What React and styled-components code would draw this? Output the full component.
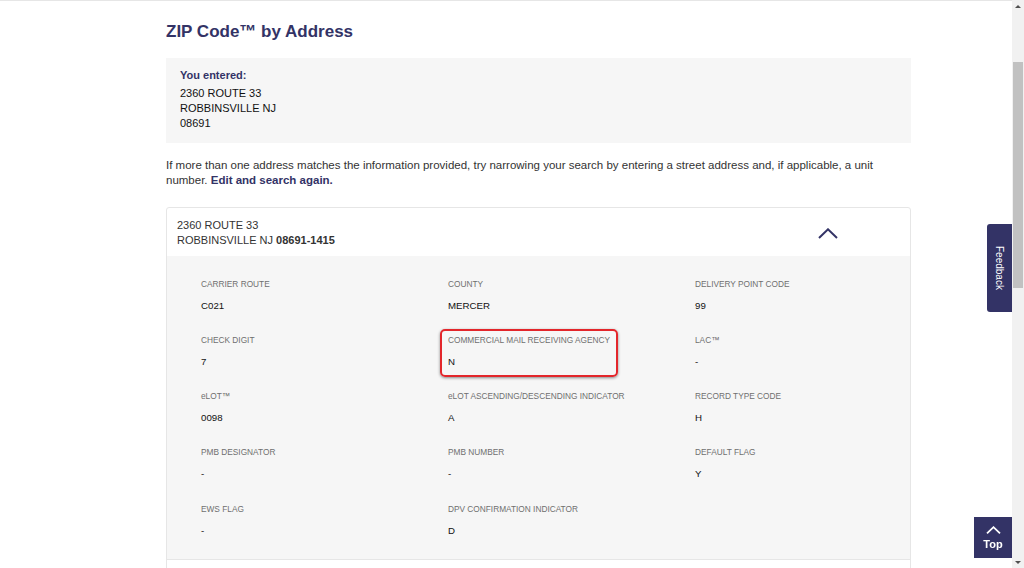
import React from "react";
import styled, { createGlobalStyle } from "styled-components";

const navy = "#333366";

const GlobalStyle = createGlobalStyle`
  html, body {
    margin: 0;
    padding: 0;
    height: 100%;
    overflow: hidden;
    background: #fff;
    font-family: "Liberation Sans", Arial, sans-serif;
  }
`;

const details = [
  { label: "CARRIER ROUTE", value: "C021" },
  { label: "COUNTY", value: "MERCER" },
  { label: "DELIVERY POINT CODE", value: "99" },
  { label: "CHECK DIGIT", value: "7" },
  { label: "COMMERCIAL MAIL RECEIVING AGENCY", value: "N", highlighted: true },
  { label: "LAC™", value: "-" },
  { label: "eLOT™", value: "0098" },
  { label: "eLOT ASCENDING/DESCENDING INDICATOR", value: "A" },
  { label: "RECORD TYPE CODE", value: "H" },
  { label: "PMB DESIGNATOR", value: "-" },
  { label: "PMB NUMBER", value: "-" },
  { label: "DEFAULT FLAG", value: "Y" },
  { label: "EWS FLAG", value: "-" },
  { label: "DPV CONFIRMATION INDICATOR", value: "D" },
];

const App = () => {
  return (
    <>
      <GlobalStyle />
      <Shell>
        <Page>
          <Title>ZIP Code™ by Address</Title>

          <EnteredBox>
            <EnteredHeading>You entered:</EnteredHeading>
            <AddressLines>
              2360 ROUTE 33
              <br />
              ROBBINSVILLE NJ
              <br />
              08691
            </AddressLines>
          </EnteredBox>

          <Note>
            If more than one address matches the information provided, try
            narrowing your search by entering a street address and, if
            applicable, a unit number. <EditLink>Edit and search again.</EditLink>
          </Note>

          <ResultCard>
            <CardHeader>
              <ResultAddress>
                2360 ROUTE 33
                <br />
                ROBBINSVILLE NJ <strong>08691-1415</strong>
              </ResultAddress>
              <Collapse aria-label="Collapse">
                <svg width="20" height="11" viewBox="0 0 20 11">
                  <polyline
                    points="1,10 10,1.3 19,10"
                    fill="none"
                    stroke={navy}
                    strokeWidth="2"
                  />
                </svg>
              </Collapse>
            </CardHeader>

            <DetailGrid>
              {details.map((d) => (
                <DetailCell key={d.label} $highlighted={d.highlighted}>
                  <DetailLabel>{d.label}</DetailLabel>
                  <DetailValue>{d.value}</DetailValue>
                </DetailCell>
              ))}
            </DetailGrid>
            <CardFooter />
          </ResultCard>
        </Page>

        <ScrollTrack>
          <ScrollArrow $dir="up" />
          <ScrollThumb />
          <ScrollArrow $dir="down" />
        </ScrollTrack>

        <FeedbackTab>Feedback</FeedbackTab>

        <TopButton>
          <svg width="15" height="8" viewBox="0 0 15 8">
            <polyline
              points="1,7.3 7.5,1.2 14,7.3"
              fill="none"
              stroke="#fff"
              strokeWidth="1.8"
            />
          </svg>
          <span>Top</span>
        </TopButton>
      </Shell>
    </>
  );
};

const Shell = styled.div`
  display: flex;
  width: 1024px;
  height: 568px;
  overflow: hidden;
`;

const Page = styled.main`
  flex: 1;
  border-top: 1px solid #e6e6e6;
  padding: 20px 101px 0 166px;
  overflow: hidden;
`;

const Title = styled.h1`
  margin: 0 0 15px;
  font-size: 17px;
  line-height: 22px;
  font-weight: 700;
  color: ${navy};
`;

const EnteredBox = styled.section`
  background: #f6f6f6;
  padding: 9.5px 14px 12px;
`;

const EnteredHeading = styled.div`
  font-size: 11px;
  line-height: 15px;
  font-weight: 700;
  color: ${navy};
  margin-bottom: 3px;
`;

const AddressLines = styled.div`
  font-size: 11px;
  line-height: 15px;
  color: #111;
`;

const Note = styled.p`
  margin: 15.5px 0 19px;
  font-size: 11.5px;
  line-height: 15px;
  color: #333;
`;

const EditLink = styled.a`
  font-weight: 700;
  color: ${navy};
  text-decoration: none;
`;

const ResultCard = styled.section`
  border: 1px solid #e6e6e6;
  border-radius: 3px;
  background: #fff;
`;

const CardHeader = styled.div`
  display: flex;
  justify-content: space-between;
  padding: 10px 0 7.5px 10px;
`;

const ResultAddress = styled.div`
  font-size: 11px;
  line-height: 15px;
  color: #333;

  strong {
    font-weight: 700;
  }
`;

const Collapse = styled.button`
  align-self: flex-end;
  display: flex;
  padding: 0;
  margin: 0 72px 9px 0;
  border: none;
  background: none;
  cursor: pointer;
`;

const DetailGrid = styled.div`
  display: grid;
  grid-template-columns: 247px 247px 1fr;
  row-gap: 21.3px;
  background: #f6f6f6;
  padding: 22px 0 21px 34px;
`;

const DetailCell = styled.div`
  position: relative;

  ${({ $highlighted }) =>
    $highlighted &&
    `
    &::after {
      content: "";
      position: absolute;
      left: -8px;
      top: -5px;
      width: 178px;
      height: 48px;
      box-sizing: border-box;
      border: 2px solid #e3262b;
      border-radius: 5px;
      box-shadow: 0 1px 3px rgba(0, 0, 0, 0.45);
    }
  `}
`;

const DetailLabel = styled.div`
  font-size: 8.3px;
  line-height: 12px;
  color: #6f6f6f;
  margin-bottom: 9px;
`;

const DetailValue = styled.div`
  font-size: 9.7px;
  line-height: 14px;
  color: #111;
`;

const CardFooter = styled.div`
  height: 40px;
  border-top: 1px solid #e6e6e6;
`;

const ScrollTrack = styled.div`
  width: 12px;
  flex-shrink: 0;
  display: flex;
  flex-direction: column;
  align-items: center;
  background: #f1f1f1;
`;

const ScrollArrow = styled.div`
  width: 12px;
  height: 12px;
  display: flex;
  align-items: center;
  justify-content: center;

  &::before {
    content: "";
    width: 0;
    height: 0;
    border-left: 3px solid transparent;
    border-right: 3px solid transparent;
    ${({ $dir }) =>
      $dir === "up"
        ? "border-bottom: 3px solid #505050;"
        : "border-top: 3px solid #505050;"}
  }

  ${({ $dir }) => ($dir === "down" ? "margin-top: auto;" : "")}
`;

const ScrollThumb = styled.div`
  width: 10px;
  height: 226px;
  margin-top: 50px;
  background: #c1c1c1;
`;

const FeedbackTab = styled.button`
  position: fixed;
  top: 224px;
  right: 12px;
  width: 25px;
  height: 88px;
  padding: 0;
  border: none;
  border-radius: 3px 0 0 3px;
  background: ${navy};
  color: #fff;
  font-family: "Liberation Sans", Arial, sans-serif;
  font-size: 10px;
  writing-mode: vertical-rl;
  display: flex;
  align-items: center;
  justify-content: center;
  cursor: pointer;
`;

const TopButton = styled.button`
  position: fixed;
  top: 517px;
  right: 12px;
  width: 38px;
  height: 41px;
  padding: 9px 0 0;
  border: none;
  background: ${navy};
  color: #fff;
  display: flex;
  flex-direction: column;
  align-items: center;
  gap: 3px;
  cursor: pointer;

  span {
    font-family: "Liberation Sans", Arial, sans-serif;
    font-size: 11px;
    font-weight: 700;
    line-height: 14px;
  }
`;

export default App;
